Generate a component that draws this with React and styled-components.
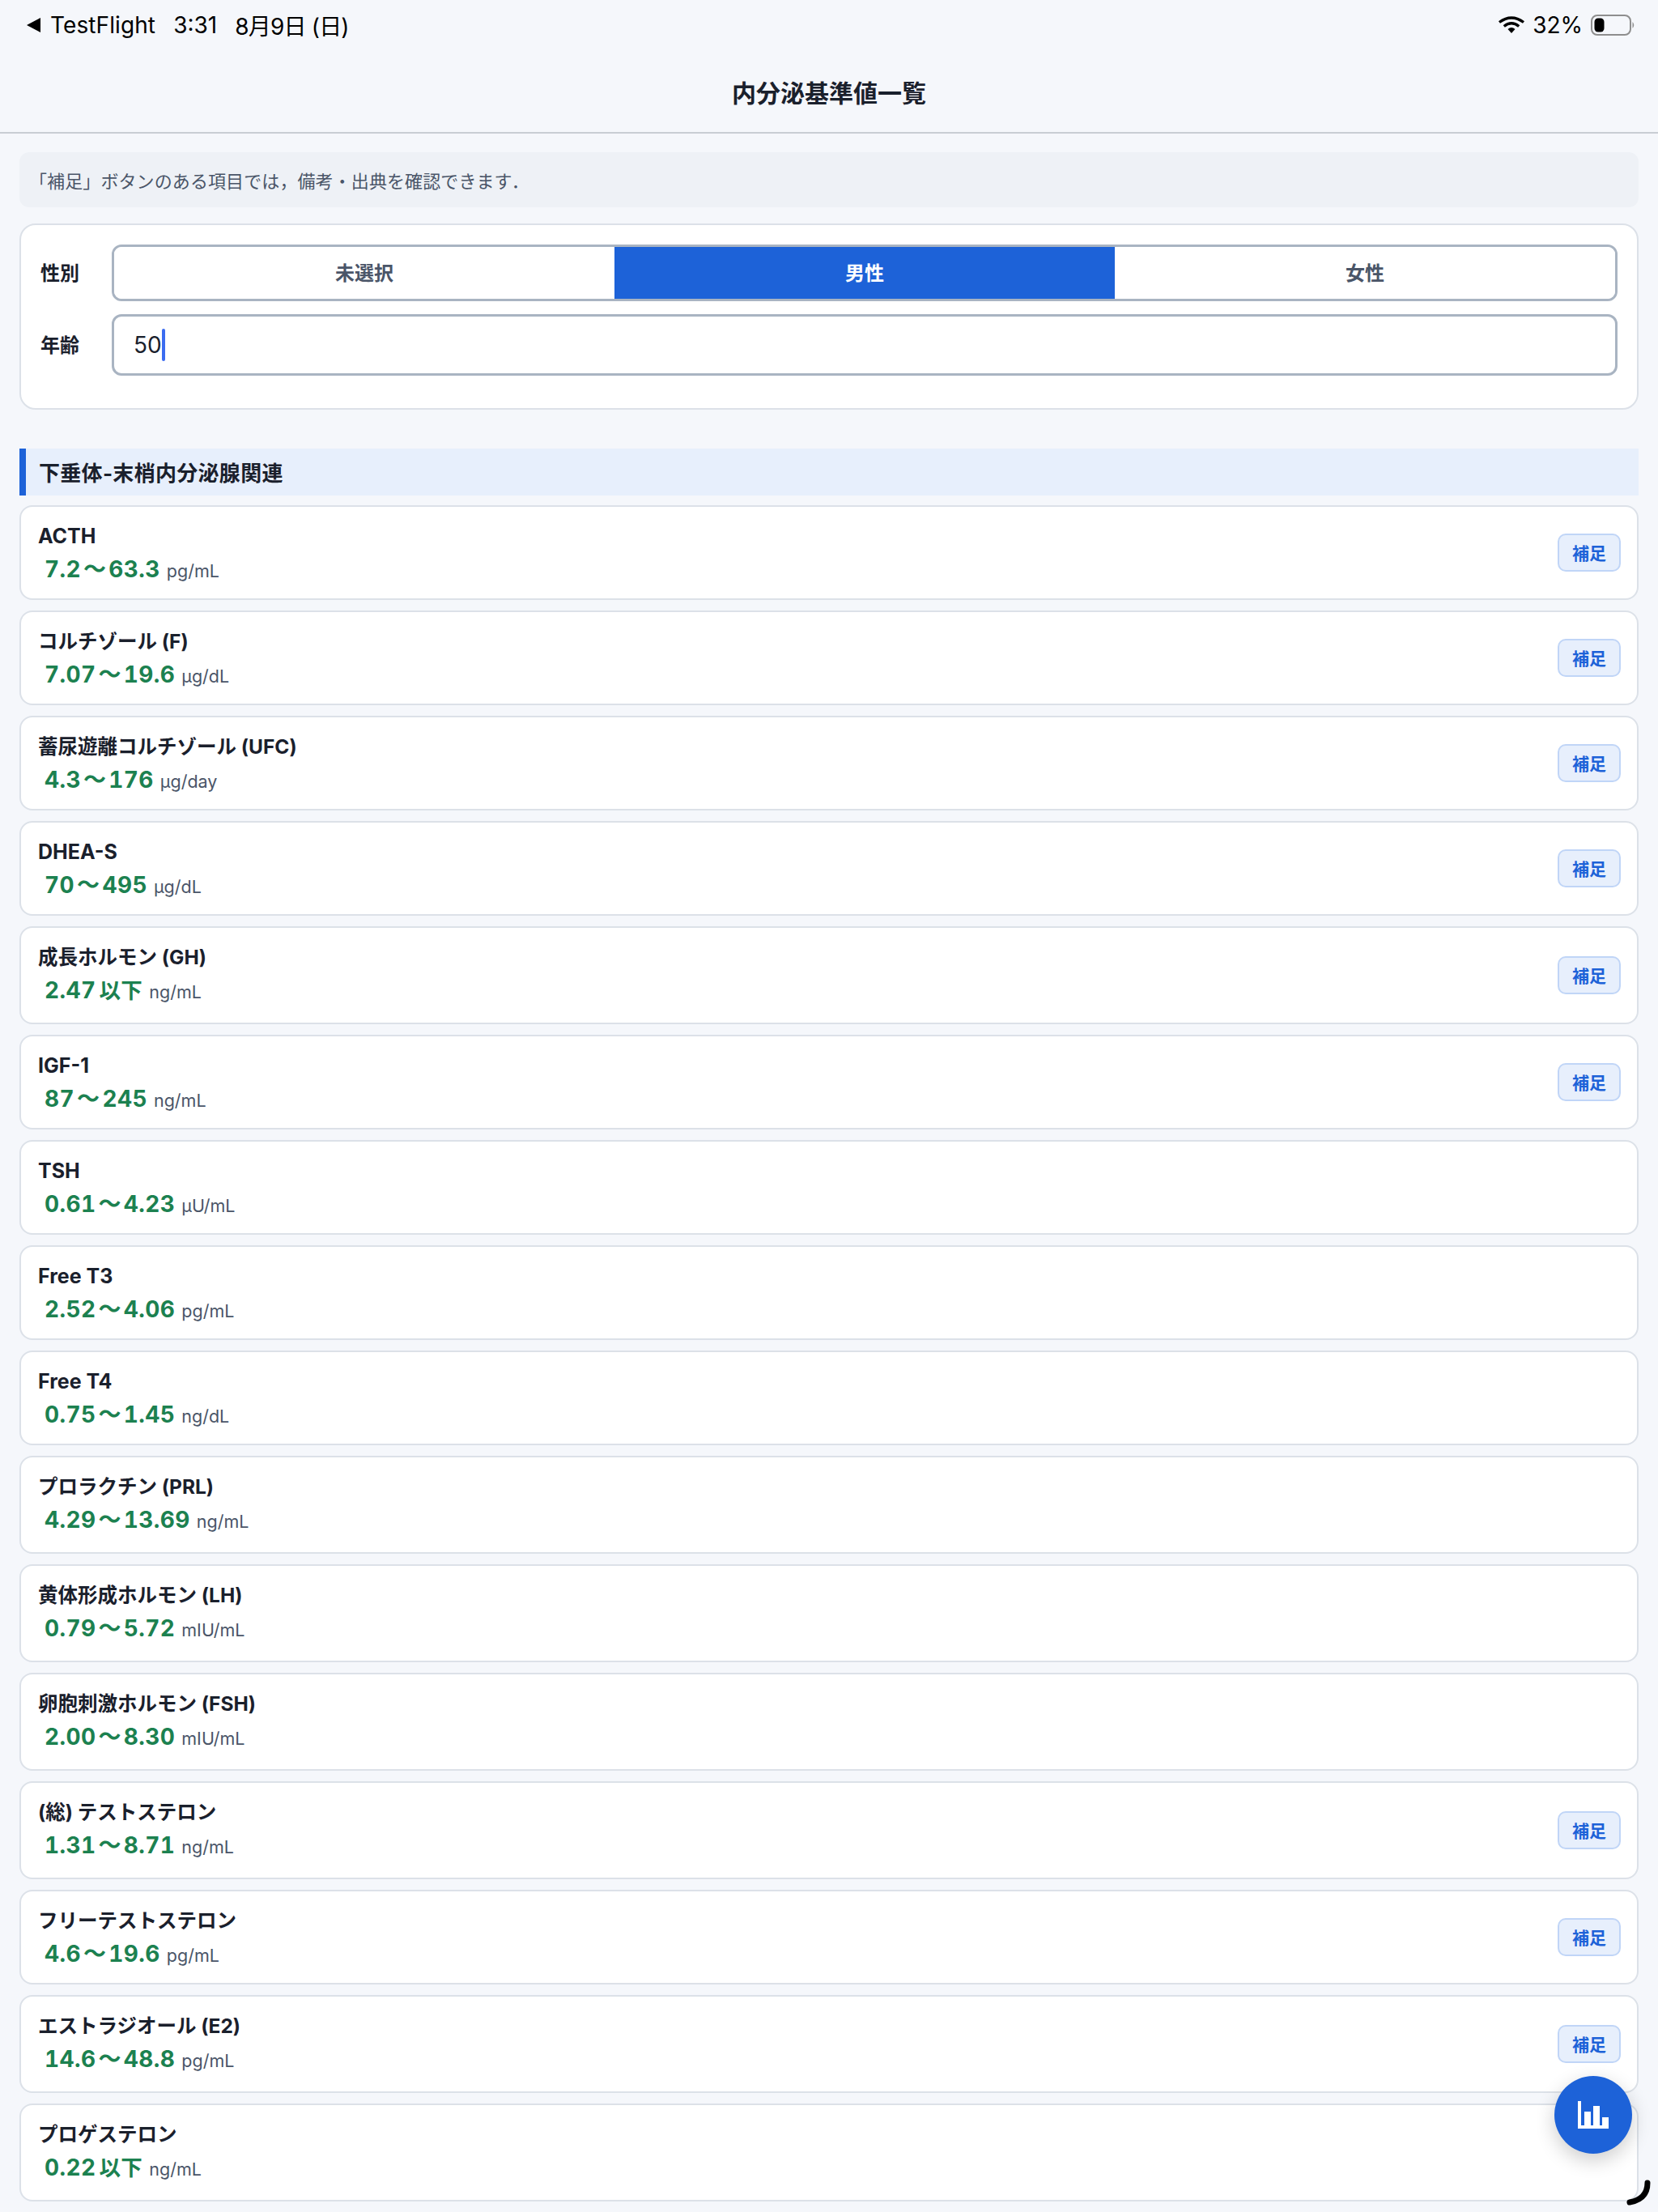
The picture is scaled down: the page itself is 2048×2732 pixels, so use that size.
import React from "react";
import styled, { createGlobalStyle } from "styled-components";

const Global = createGlobalStyle`
  html, body { margin: 0; padding: 0; background: #f5f7fb; }
  body { font-family: Inter, "Noto Sans CJK JP", sans-serif; color: #1a202c; }
  #root { width: 2048px; height: 2732px; overflow: hidden; position: relative; }
`;

const Page = styled.div`
  width: 2048px;
  height: 2732px;
  position: relative;
  overflow: hidden;
  background: #f5f7fb;
`;

const Header = styled.header`
  height: 165px;
  box-sizing: border-box;
  border-bottom: 2px solid #c9cdd3;
  display: flex;
  flex-direction: column;
`;

const StatusBar = styled.div`
  height: 62px;
  padding: 0 27px 0 33px;
  display: flex;
  align-items: center;
  justify-content: space-between;
  font-size: 28px;
  color: #000;
`;

const StatusGroup = styled.div`
  display: flex;
  align-items: center;
  gap: ${(p) => p.$gap || 0}px;
`;

const BackApp = styled.span`
  display: flex;
  align-items: center;
  gap: 11px;
  letter-spacing: 0.1px;
`;

const BackArrow = styled.svg`
  flex: none;
`;

const DateText = styled.span`
  letter-spacing: -0.8px;
`;

const Title = styled.h1`
  margin: 0;
  flex: 1;
  display: flex;
  align-items: center;
  justify-content: center;
  font-size: 30px;
  font-weight: 700;
  color: #1a202c;
`;

const Main = styled.main`
  padding: 23px 24px 0;
  display: flex;
  flex-direction: column;
`;

const Note = styled.p`
  margin: 0 0 20px;
  height: 68px;
  box-sizing: border-box;
  display: flex;
  align-items: center;
  padding: 0 12px;
  background: #eef1f6;
  border-radius: 12px;
  font-size: 22px;
  letter-spacing: 0.1px;
  color: #4a5568;
`;

const FilterCard = styled.section`
  height: 230px;
  box-sizing: border-box;
  background: #fff;
  border: 2px solid #dce1e8;
  border-radius: 20px;
  padding: 24px 24px 0 24px;
  display: flex;
  flex-direction: column;
  gap: 16px;
  margin-bottom: 48px;
`;

const FilterRow = styled.div`
  display: flex;
  align-items: center;
`;

const FilterLabel = styled.label`
  width: 88px;
  flex: none;
  font-size: 24px;
  font-weight: 600;
  color: #1a202c;
  padding-bottom: 3px;
`;

const Segments = styled.div`
  flex: 1;
  height: 70px;
  box-sizing: border-box;
  border: 3px solid #a9b4c2;
  border-radius: 12px;
  overflow: hidden;
  display: grid;
  grid-template-columns: repeat(3, 1fr);
  background: #fff;
`;

const Segment = styled.div`
  display: flex;
  align-items: center;
  justify-content: center;
  font-size: 24px;
  font-weight: 600;
  padding-bottom: 3px;
  background: ${(p) => (p.$active ? "#1d62d8" : "#fff")};
  color: ${(p) => (p.$active ? "#fff" : "#4a5568")};
`;

const AgeInput = styled.div`
  flex: 1;
  height: 76px;
  box-sizing: border-box;
  border: 3px solid #a9b4c2;
  border-radius: 12px;
  background: #fff;
  display: flex;
  align-items: center;
  padding-left: 24px;
  font-size: 28px;
  color: #1a202c;
`;

const Caret = styled.span`
  width: 4px;
  height: 40px;
  background: #3b6cf0;
  border-radius: 2px;
`;

const SectionHeading = styled.h2`
  margin: 0 0 12px;
  height: 58px;
  box-sizing: border-box;
  display: flex;
  align-items: center;
  padding: 0 0 2px 16px;
  border-left: 8px solid #1d62d8;
  background: #e7effc;
  font-size: 26px;
  font-weight: 700;
  letter-spacing: 0.3px;
  color: #1a202c;
`;

const List = styled.div`
  display: flex;
  flex-direction: column;
  gap: 13px;
`;

const Item = styled.article`
  height: ${(p) => (p.$tall ? 121 : 117)}px;
  box-sizing: border-box;
  background: #fff;
  border: 2px solid #dce1e8;
  border-radius: 16px;
  padding: 0 20px 0 21px;
  display: flex;
  align-items: center;
  justify-content: space-between;
`;

const ItemBody = styled.div`
  align-self: flex-start;
  padding-top: 19px;
  display: flex;
  flex-direction: column;
  gap: 5px;
`;

const ItemName = styled.div`
  font-size: ${(p) => (p.$cjk ? 24.5 : 25)}px;
  font-weight: 700;
  line-height: 34px;
  color: #1a202c;
`;

const ItemValue = styled.div`
  padding-left: 8px;
  line-height: 38px;
  display: flex;
  align-items: baseline;
  gap: 8px;
`;

const Range = styled.span`
  font-size: 28px;
  font-weight: 700;
  letter-spacing: 0.4px;
  font-variant-numeric: tabular-nums;
  color: #1c8150;
`;

const Tilde = styled.span`
  margin: 0 3px;
`;

const Suffix = styled.span`
  margin-left: 4px;
  font-size: 26.5px;
`;

const Unit = styled.span`
  font-size: 21.5px;
  color: #4a5568;
`;

const NoteButton = styled.button`
  width: 78px;
  height: 47px;
  padding: 0 0 2px;
  flex: none;
  background: #e7effc;
  border: 2px solid #c0d5f7;
  border-radius: 10px;
  color: #1d62d8;
  font: 600 21px Inter, "Noto Sans CJK JP", sans-serif;
`;

const Fab = styled.button`
  position: absolute;
  left: 1920px;
  top: 2564px;
  width: 96px;
  height: 96px;
  border: 0;
  padding: 0;
  border-radius: 50%;
  background: #1d62d8;
  box-shadow: 0 8px 24px rgba(0, 0, 0, 0.2);
  display: flex;
  align-items: center;
  justify-content: center;
`;

const Spinner = styled.svg`
  position: absolute;
  left: 2005px;
  top: 2688px;
`;

const rows = [
  { name: "ACTH", low: "7.2", high: "63.3", unit: "pg/mL", note: true },
  { name: "コルチゾール (F)", low: "7.07", high: "19.6", unit: "µg/dL", note: true },
  { name: "蓄尿遊離コルチゾール (UFC)", low: "4.3", high: "176", unit: "µg/day", note: true },
  { name: "DHEA-S", low: "70", high: "495", unit: "µg/dL", note: true },
  { name: "成長ホルモン (GH)", low: "2.47", suffix: "以下", unit: "ng/mL", note: true, tall: true },
  { name: "IGF-1", low: "87", high: "245", unit: "ng/mL", note: true },
  { name: "TSH", low: "0.61", high: "4.23", unit: "µU/mL" },
  { name: "Free T3", low: "2.52", high: "4.06", unit: "pg/mL" },
  { name: "Free T4", low: "0.75", high: "1.45", unit: "ng/dL" },
  { name: "プロラクチン (PRL)", low: "4.29", high: "13.69", unit: "ng/mL", tall: true },
  { name: "黄体形成ホルモン (LH)", low: "0.79", high: "5.72", unit: "mIU/mL", tall: true },
  { name: "卵胞刺激ホルモン (FSH)", low: "2.00", high: "8.30", unit: "mIU/mL", tall: true },
  { name: "(総) テストステロン", low: "1.31", high: "8.71", unit: "ng/mL", note: true, tall: true },
  { name: "フリーテストステロン", low: "4.6", high: "19.6", unit: "pg/mL", note: true },
  { name: "エストラジオール (E2)", low: "14.6", high: "48.8", unit: "pg/mL", note: true, tall: true },
  { name: "プロゲステロン", low: "0.22", suffix: "以下", unit: "ng/mL", tall: true },
];

const Wifi = () => (
  <svg width="32" height="22" viewBox="0 0 32 22">
    <path d="M16 21 L11.5 16 Q16 12 20.5 16 Z" fill="#000" />
    <path d="M6.8 12.5 Q16 5 25.2 12.5" fill="none" stroke="#000" strokeWidth="3.4" />
    <path d="M1 7.5 Q16 -3.5 31 7.5" fill="none" stroke="#000" strokeWidth="3.4" />
  </svg>
);

const Battery = () => (
  <svg width="56" height="26" viewBox="0 0 56 26">
    <rect x="1" y="1" width="48" height="24" rx="7" fill="none" stroke="#8e8e8e" strokeWidth="2" />
    <rect x="4.5" y="4.5" width="12" height="17" rx="4.5" fill="#000" />
    <path d="M51.5 9 Q55 13 51.5 17 Z" fill="#8e8e8e" />
  </svg>
);

const ChartIcon = () => (
  <svg width="38" height="34" viewBox="0 0 38 34" fill="#fff">
    <rect x="0" y="0" width="4" height="34" />
    <rect x="0" y="30" width="38" height="4" />
    <rect x="8" y="13" width="8" height="17" />
    <rect x="19" y="6" width="8" height="24" />
    <rect x="30" y="20" width="8" height="10" />
  </svg>
);

const hasCjk = (text) => /[^\x00-\x7f]/.test(text);

export default function App() {
  return (
    <Page>
      <Global />
      <Header>
        <StatusBar>
          <StatusGroup $gap={22}>
            <BackApp>
              <BackArrow width="18" height="18" viewBox="0 0 18 18">
                <path d="M0 9 L17 0 V18 Z" fill="#000" />
              </BackArrow>
              TestFlight
            </BackApp>
            <span>3:31</span>
            <DateText>8月9日 (日)</DateText>
          </StatusGroup>
          <StatusGroup $gap={10}>
            <Wifi />
            <span>32%</span>
            <Battery />
          </StatusGroup>
        </StatusBar>
        <Title>内分泌基準値一覧</Title>
      </Header>
      <Main>
        <Note>「補足」ボタンのある項目では，備考・出典を確認できます．</Note>
        <FilterCard>
          <FilterRow>
            <FilterLabel>性別</FilterLabel>
            <Segments>
              <Segment>未選択</Segment>
              <Segment $active>男性</Segment>
              <Segment>女性</Segment>
            </Segments>
          </FilterRow>
          <FilterRow>
            <FilterLabel>年齢</FilterLabel>
            <AgeInput>
              50
              <Caret />
            </AgeInput>
          </FilterRow>
        </FilterCard>
        <SectionHeading>下垂体-末梢内分泌腺関連</SectionHeading>
        <List>
          {rows.map((r) => (
            <Item key={r.name} $tall={r.tall}>
              <ItemBody>
                <ItemName $cjk={hasCjk(r.name)}>{r.name}</ItemName>
                <ItemValue>
                  <Range>
                    {r.low}
                    {r.high && <Tilde>〜</Tilde>}
                    {r.high}
                    {r.suffix && <Suffix>{r.suffix}</Suffix>}
                  </Range>
                  <Unit>{r.unit}</Unit>
                </ItemValue>
              </ItemBody>
              {r.note && <NoteButton>補足</NoteButton>}
            </Item>
          ))}
        </List>
      </Main>
      <Fab aria-label="chart">
        <ChartIcon />
      </Fab>
      <Spinner width="36" height="38" viewBox="0 0 36 38">
        <path d="M30 8 Q30 28 8 32" fill="none" stroke="#000" strokeWidth="7" strokeLinecap="round" />
      </Spinner>
    </Page>
  );
}
